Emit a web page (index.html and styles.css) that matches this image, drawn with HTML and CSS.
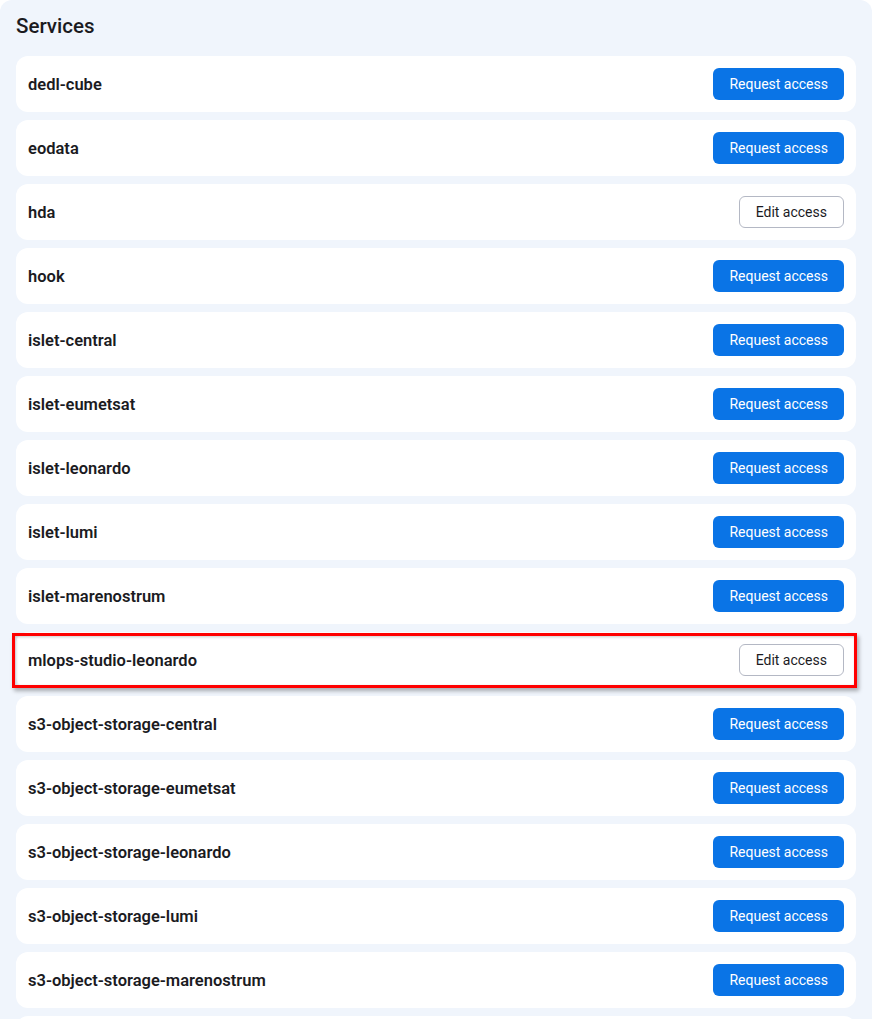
FILE: index.html
```html
<!DOCTYPE html>
<html lang="en">
<head>
<meta charset="utf-8">
<title>Services</title>
<link rel="stylesheet" href="styles.css">
</head>
<body>
<section class="panel">
  <h2 class="title">Services</h2>
  <ul class="list">
    <li class="card"><span class="name">dedl-cube</span><button class="btn btn-primary">Request access</button></li>
    <li class="card"><span class="name">eodata</span><button class="btn btn-primary">Request access</button></li>
    <li class="card"><span class="name">hda</span><button class="btn btn-outline">Edit access</button></li>
    <li class="card"><span class="name">hook</span><button class="btn btn-primary">Request access</button></li>
    <li class="card"><span class="name">islet-central</span><button class="btn btn-primary">Request access</button></li>
    <li class="card"><span class="name">islet-eumetsat</span><button class="btn btn-primary">Request access</button></li>
    <li class="card"><span class="name">islet-leonardo</span><button class="btn btn-primary">Request access</button></li>
    <li class="card"><span class="name">islet-lumi</span><button class="btn btn-primary">Request access</button></li>
    <li class="card"><span class="name">islet-marenostrum</span><button class="btn btn-primary">Request access</button></li>
    <li class="card card-highlight"><span class="name">mlops-studio-leonardo</span><button class="btn btn-outline">Edit access</button><span class="highlight-box"></span></li>
    <li class="card"><span class="name">s3-object-storage-central</span><button class="btn btn-primary">Request access</button></li>
    <li class="card"><span class="name">s3-object-storage-eumetsat</span><button class="btn btn-primary">Request access</button></li>
    <li class="card"><span class="name">s3-object-storage-leonardo</span><button class="btn btn-primary">Request access</button></li>
    <li class="card"><span class="name">s3-object-storage-lumi</span><button class="btn btn-primary">Request access</button></li>
    <li class="card"><span class="name">s3-object-storage-marenostrum</span><button class="btn btn-primary">Request access</button></li>
    <li class="card"></li>
  </ul>
</section>
</body>
</html>
```
FILE: styles.css
```css
html, body {
  margin: 0;
  padding: 0;
  background: #ffffff;
}
body {
  font-family: Roboto, "Liberation Sans", Arial, sans-serif;
  color: #1b1b1f;
  overflow: hidden;
}
.panel {
  width: 872px;
  box-sizing: border-box;
  background: #f0f5fc;
  border-radius: 12px 12px 0 0;
  padding: 12px 16px 16px 16px;
}
.title {
  margin: 0 0 16px 0;
  font-size: 20.5px;
  line-height: 28px;
  font-weight: 500;
  color: #1b1b1f;
}
.list {
  list-style: none;
  margin: 0;
  padding: 0;
  display: flex;
  flex-direction: column;
  gap: 8px;
}
.card {
  position: relative;
  height: 56px;
  box-sizing: border-box;
  background: #ffffff;
  border-radius: 12px;
  padding: 0 12px;
  display: flex;
  align-items: center;
  justify-content: space-between;
}
.name {
  font-size: 16.5px;
  font-weight: 600;
  color: #1b1b1f;
}
.btn {
  height: 32px;
  box-sizing: border-box;
  padding: 0 16px;
  border-radius: 6px;
  font-family: Roboto, "Liberation Sans", Arial, sans-serif;
  font-size: 14px;
  font-weight: 400;
  cursor: pointer;
}
.btn-primary {
  background: #0a74e6;
  color: #ffffff;
  border: none;
}
.btn-outline {
  background: #ffffff;
  color: #1b1b1f;
  border: 1px solid #b4b8c4;
}
.highlight-box {
  position: absolute;
  left: -4px;
  top: 1px;
  width: 845px;
  height: 55px;
  box-sizing: border-box;
  border: 3px solid #ff0000;
  box-shadow: 2px 3px 4px rgba(0, 0, 0, 0.3), inset 1px 1px 3px rgba(0, 0, 0, 0.2);
  pointer-events: none;
}
```
